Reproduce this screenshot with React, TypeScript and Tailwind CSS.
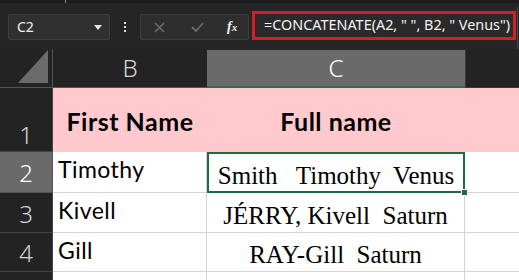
import React from "react";

const sans = { fontFamily: '"Noto Sans", "Open Sans", sans-serif' };
const cal = { fontFamily: 'Lato, "Liberation Sans", sans-serif' };
const serif = { fontFamily: '"Liberation Serif", "DejaVu Serif", serif' };

export default function App() {
  return (
    <div className="w-[519px] h-[280px] overflow-hidden bg-[#252525] flex flex-col">
      {/* top strip */}
      <div className="h-[4px] bg-[#1c1c1c] flex">
        <div className="ml-[65px] w-[1px] h-[3px] bg-[#888]" />
      </div>
      {/* formula bar */}
      <div className="h-[46px] flex items-start bg-[#252525]">
        <div className="ml-[8px] mt-[11px] w-[102px] h-[26px] bg-[#303030] border border-[#3e3e3e] rounded-[2px] flex items-center justify-between pl-[8px] pr-[7px]">
          <span className="text-[14px] text-[#f0f0f0] leading-none" style={sans}>C2</span>
          <svg width="8" height="5" viewBox="0 0 8 5"><path d="M0 0 L8 0 L4 5 Z" fill="#e8e8e8" /></svg>
        </div>
        <div className="w-[30px] mt-[19px] flex flex-col items-center gap-[2px]">
          <div className="w-[2px] h-[2px] bg-[#e0e0e0]" />
          <div className="w-[2px] h-[2px] bg-[#e0e0e0]" />
          <div className="w-[2px] h-[2px] bg-[#e0e0e0]" />
        </div>
        <div className="mt-[11px] w-[109px] h-[26px] bg-[#2e2e2e] border border-[#3e3e3e] rounded-[2px] flex items-center">
          <svg className="ml-[13px]" width="11" height="11" viewBox="0 0 11 11"><path d="M1 1 L10 10 M10 1 L1 10" stroke="#6a6a6a" strokeWidth="1.6" /></svg>
          <svg className="ml-[26px]" width="13" height="10" viewBox="0 0 13 10"><path d="M1 5 L5 9 L12 1" stroke="#6a6a6a" strokeWidth="1.8" fill="none" /></svg>
          <span className="ml-[23px] text-[14px] text-[#f2f2f2] italic font-bold leading-none" style={serif}>f<span className="text-[11px]">x</span></span>
        </div>
        <div className="ml-[3px] mt-[8px] w-[264px] h-[29px] border-[3px] border-[#d0202a] bg-[#2a2a2a] flex items-center pl-[9px]">
          <span className="text-[14.4px] text-[#f2f2f2] whitespace-pre leading-none" style={sans}>=CONCATENATE(A2, " ", B2, " Venus")</span>
        </div>
        <div className="ml-[1px] mt-[4px] w-[1px] h-[42px] bg-[#4a4a4a]" />
      </div>
      {/* grid */}
      <div className="grid grid-cols-[53px_154px_258px_54px] grid-rows-[39px_64px_41px_40px_39px_20px]">
        {/* header row */}
        <div className="bg-[#232323] border-r border-b border-[#555] flex items-end justify-end pr-[4px] pb-[4px]">
          <svg width="30" height="33" viewBox="0 0 30 33"><path d="M30 0 L30 33 L0 33 Z" fill="#6b6b6b" /></svg>
        </div>
        <div className="bg-[#232323] border-b border-[#555] flex items-center justify-center text-[24px] text-[#d4d4d4] font-light" style={sans}>B</div>
        <div className="bg-[#6a6a6a] border-b-2 border-[#2f6b45] mt-[1px] flex items-center justify-center text-[24px] text-white font-light" style={sans}>C</div>
        <div className="bg-[#232323] border-l border-b border-[#3a3a3a]" />

        {/* row 1 */}
        <div className="bg-[#232323] border-r border-b border-[#444] flex items-end justify-center pb-[4px] text-[24px] text-[#d4d4d4] font-light leading-none" style={sans}>1</div>
        <div className="bg-[#ffc9ce] flex items-center justify-center pt-[4px] text-[25px] tracking-[0.02em] font-bold text-black" style={cal}>First Name</div>
        <div className="bg-[#ffc9ce] flex items-center justify-center pt-[4px] text-[25px] tracking-[0.02em] font-bold text-black" style={cal}>Full name</div>
        <div className="bg-[#ffc9ce]" />

        {/* row 2 */}
        <div className="bg-[#6a6a6a] border-r border-b border-[#555] flex items-end justify-center pb-[7px] text-[24px] text-white font-light leading-none" style={sans}>2</div>
        <div className="bg-white border-r border-b border-[#d4d4d4] flex items-end pl-[5px] pb-[11px] text-[23px] tracking-[0.02em] text-black leading-none" style={cal}>Timothy</div>
        <div className="relative bg-white border-2 border-[#1f6b40] flex items-end justify-center pb-[3px] text-[25px] text-black whitespace-pre leading-none" style={serif}>
          Smith   Timothy  Venus
          <div className="absolute right-[-5px] bottom-[-5px] w-[7px] h-[7px] bg-[#1f6b40] border border-white" />
        </div>
        <div className="bg-white border-b border-[#d4d4d4]" />

        {/* row 3 */}
        <div className="bg-[#232323] border-r border-b border-[#444] flex items-end justify-center pb-[6px] text-[24px] text-[#d4d4d4] font-light leading-none" style={sans}>3</div>
        <div className="bg-white border-r border-b border-[#d4d4d4] flex items-end pl-[5px] pb-[10px] text-[23px] tracking-[0.02em] text-black leading-none" style={cal}>Kivell</div>
        <div className="bg-white border-r border-b border-[#d4d4d4] flex items-end justify-center pb-[4px] text-[25px] text-black whitespace-pre leading-none" style={serif}>JÉRRY, Kivell  Saturn</div>
        <div className="bg-white border-b border-[#d4d4d4]" />

        {/* row 4 */}
        <div className="bg-[#232323] border-r border-b border-[#444] flex items-end justify-center pb-[6px] text-[24px] text-[#d4d4d4] font-light leading-none" style={sans}>4</div>
        <div className="bg-white border-r border-b border-[#d4d4d4] flex items-end pl-[5px] pb-[9px] text-[23px] tracking-[0.02em] text-black leading-none" style={cal}>Gill</div>
        <div className="bg-white border-r border-b border-[#d4d4d4] flex items-end justify-center pb-[4px] text-[25px] text-black whitespace-pre leading-none" style={serif}>RAY-Gill  Saturn</div>
        <div className="bg-white border-b border-[#d4d4d4]" />

        {/* row 5 */}
        <div className="bg-[#232323] border-r border-[#444]" />
        <div className="bg-white border-r border-[#d4d4d4]" />
        <div className="bg-white border-r border-[#d4d4d4]" />
        <div className="bg-white" />
      </div>
    </div>
  );
}
